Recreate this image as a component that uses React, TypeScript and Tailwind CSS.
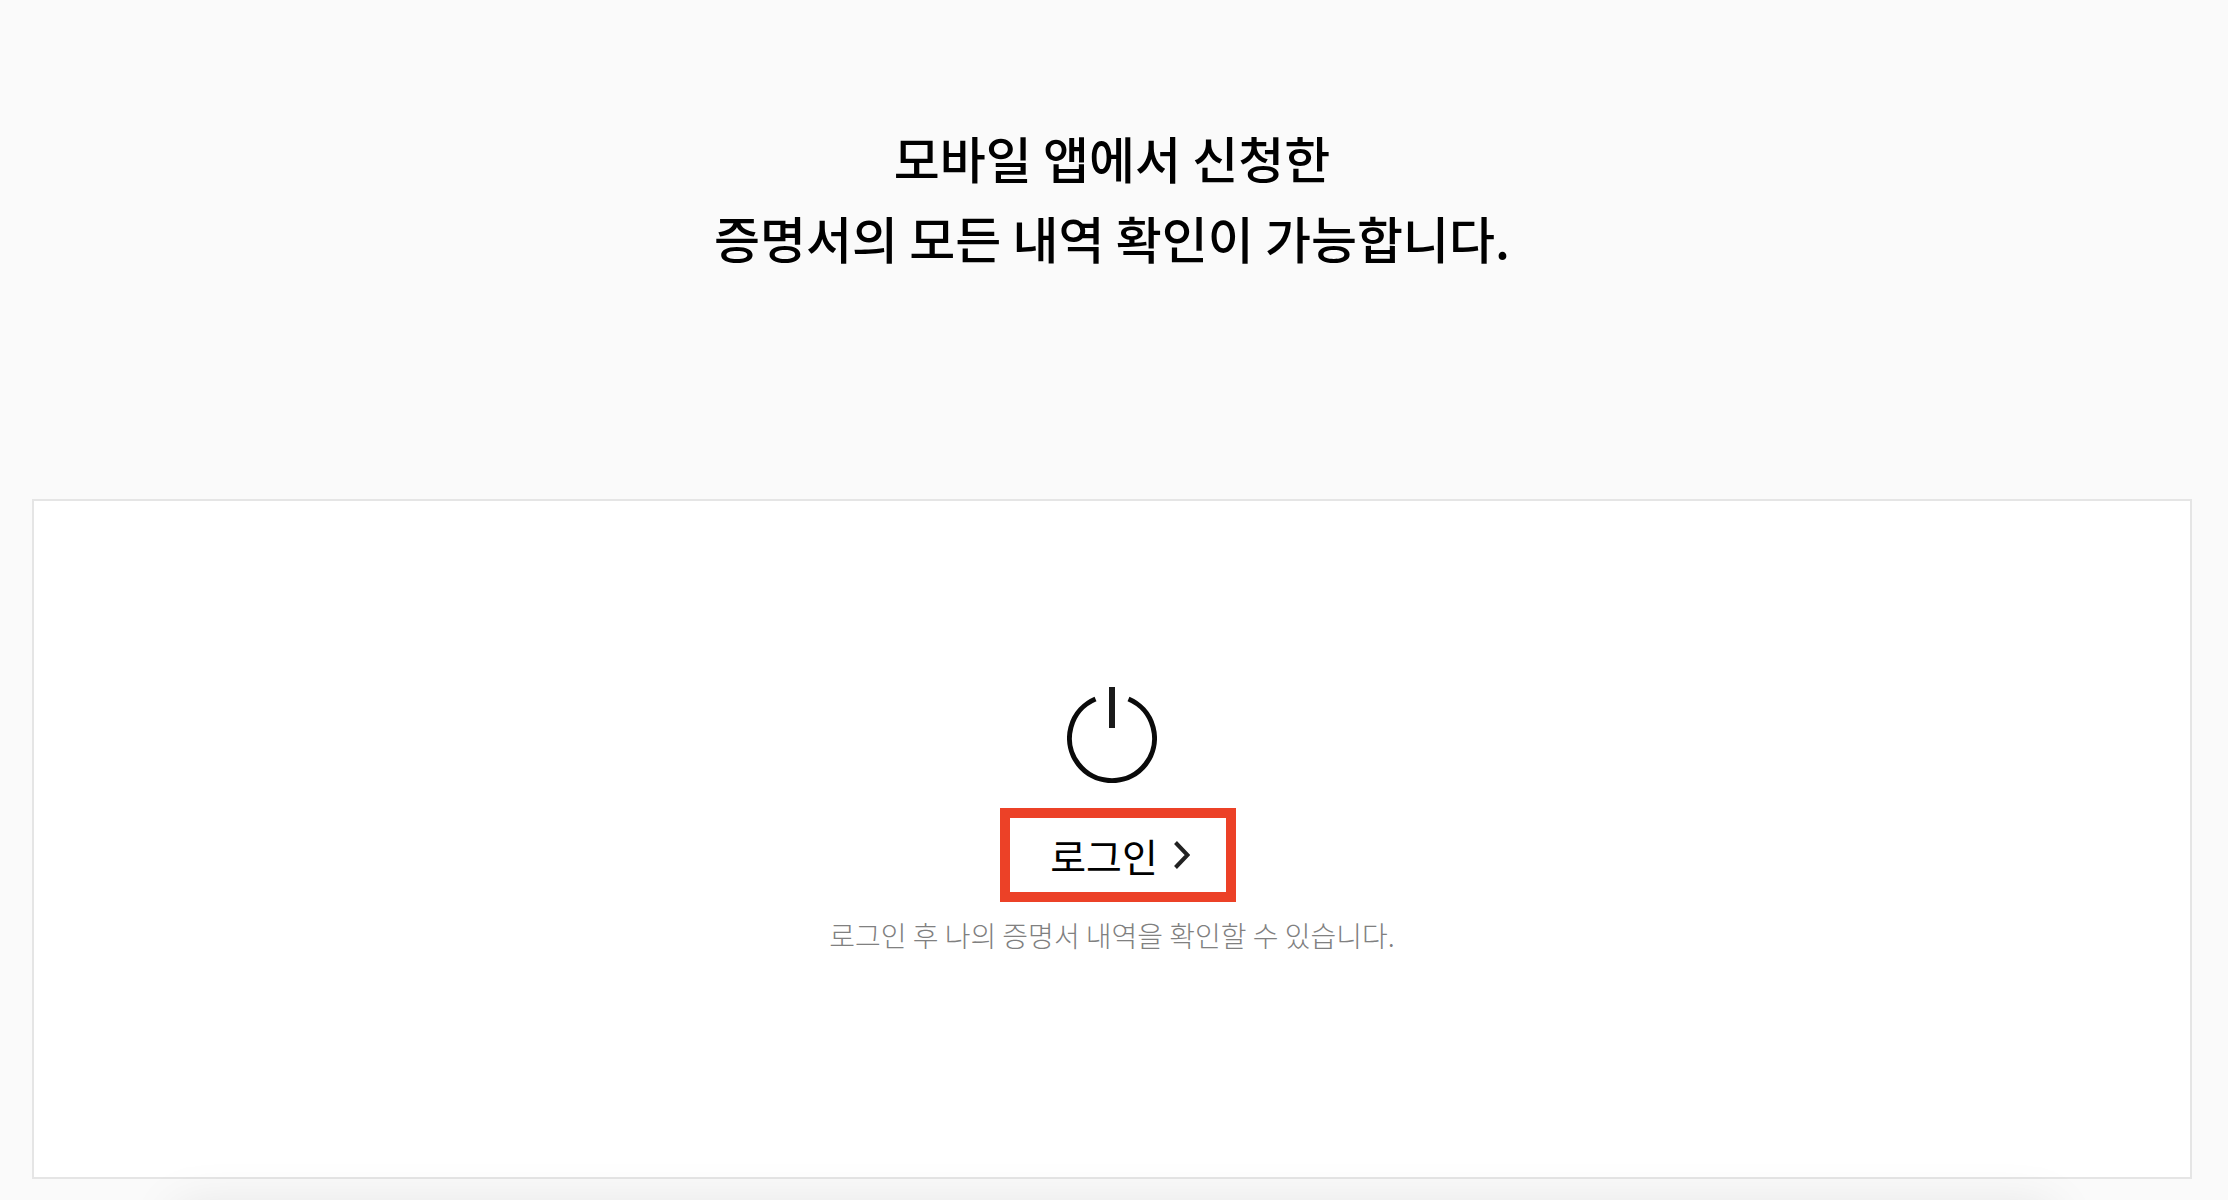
type PowerIconProps = {
  className?: string;
};

function PowerIcon({ className }: PowerIconProps) {
  return (
    <svg
      viewBox="0 0 90 96"
      fill="none"
      stroke="#0a0a0a"
      strokeWidth="5"
      className={className}
      aria-hidden="true"
    >
      <path d="M28.5 12A42.5 42.5 0 1 0 61.5 12" />
      <path d="M45 0V41" stroke="#1a1a1a" strokeWidth="6" />
    </svg>
  );
}

function ArrowIcon() {
  return (
    <svg
      viewBox="0 0 16 28"
      fill="none"
      stroke="#222222"
      strokeWidth="4"
      className="w-4 h-7"
      aria-hidden="true"
    >
      <path d="M1.5 1.5L13.5 14L1.5 26.5" />
    </svg>
  );
}

export default function App() {
  return (
    <div className="min-h-screen overflow-hidden bg-[#fafafa] pl-8 pr-9 pt-[117px] pb-5 font-['Noto_Sans_CJK_KR','Noto_Sans',sans-serif]">
      <header className="text-center">
        <h1 className="text-[50px] leading-[80px] font-medium text-black">
          모바일 앱에서 신청한
          <br />
          증명서의 모든 내역 확인이 가능합니다.
        </h1>
      </header>

      <main className="mt-[222px] flex min-h-[680px] flex-col items-center border-2 border-[#e5e5e5] bg-white pt-[186px]">
        <PowerIcon className="w-[90px] h-24" />

        <a
          href="#login"
          className="mt-[25px] ml-3 flex h-[94px] items-center gap-4 border-10 border-[#ec4127] pl-10 pr-9 text-[39px] leading-none font-normal text-black"
        >
          로그인
          <ArrowIcon />
        </a>

        <p className="mt-3 text-[28px] leading-[42px] font-light text-[#808080]">
          로그인 후 나의 증명서 내역을 확인할 수 있습니다.
        </p>
      </main>

      <div className="fixed top-full inset-x-44 mt-2 h-40 shadow-[0_0_48px_rgba(0,0,0,0.1)]" />
    </div>
  );
}
